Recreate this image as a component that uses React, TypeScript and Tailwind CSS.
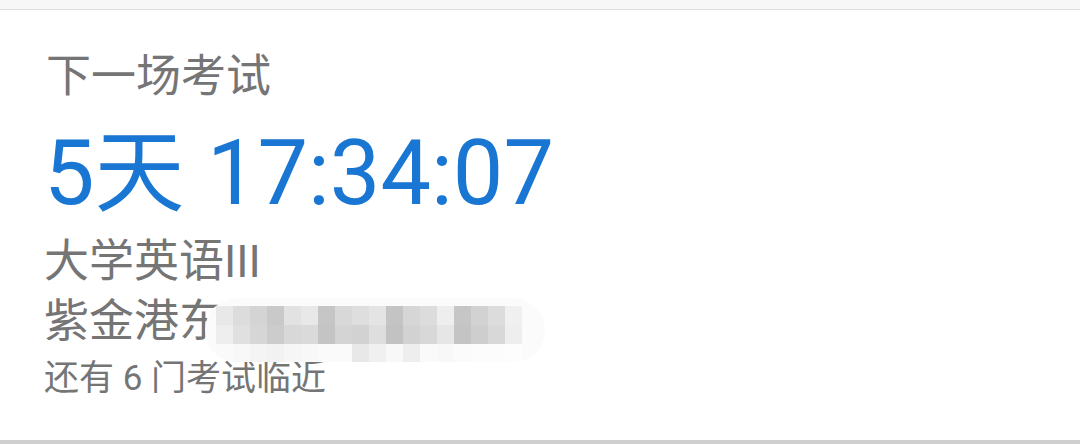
import React from 'react';

// Mosaic used where the original location text is masked
const mosaic = [
  ['#e8e8e8', '#dcdcdc', '#d4d4d4', '#c9c9c9', '#e2e2e2', '#e8e8e8', '#c6c6c6', '#d8d8d8', '#dedede', '#e4e4e4', '#c4c4c4', '#d6d6d6', '#dcdcdc', '#eeeeee', '#c6c6c6', '#d2d2d2', '#dcdcdc', '#f0f0f0'],
  ['#eeeeee', '#e0e0e0', '#d6d6d6', '#cccccc', '#d8d8d8', '#dadada', '#c4c4c4', '#d4d4d4', '#d2d2d2', '#dedede', '#c2c2c2', '#d2d2d2', '#d8d8d8', '#e6e6e6', '#c4c4c4', '#cecece', '#d8d8d8', '#eeeeee'],
  ['#fafafa', '#f8f8f8', '#f4f4f4', '#f2f2f2', '#f6f6f6', '#f8f8f8', '#fafafa', '#fafafa', '#e8e8e8', '#f0f0f0', '#f8f8f8', '#eeeeee', '#fafafa', '#f8f8f8', '#fbfbfb', '#fcfcfc', '#fcfcfc', '#fdfdfd'],
];

const App = () => {
  return (
    <div className="w-[1080px] h-[444px] bg-[#f5f5f5] overflow-hidden" style={{ fontFamily: 'Roboto, "Noto Sans CJK SC", sans-serif' }}>
      <div className="h-[9px] bg-[#f7f7f7]" />
      <div className="h-[431px] bg-white border-t border-[#dedede] px-[46px] pt-[40px] text-[#757575]">
        <div className="h-[53px] text-[45px] leading-[53px]">下一场考试</div>
        <div className="h-[124px] text-[90px] leading-[142px] text-[#1976d2] -ml-[2px] whitespace-nowrap">5天 17:34:07</div>
        <div className="h-[69px] text-[45px] leading-[69px] -ml-[2px]">大学英语III</div>
        <div className="relative h-[51px] text-[45px] leading-[51px] -ml-[2px]">
          紫金港东
          <div className="absolute left-[161px] top-[2px] h-[64px] w-[340px] rounded-full bg-[#fbfbfb] overflow-hidden">
            <div className="absolute left-[11px] top-[8px] flex flex-col">
              {mosaic.map((row, i) => (
                <div key={i} className="flex">
                  {row.map((c, j) => (
                    <div key={j} className="w-[17px] h-[19px]" style={{ background: c }} />
                  ))}
                </div>
              ))}
            </div>
          </div>
        </div>
        <div className="h-[64px] text-[35px] leading-[64px] -ml-[2px]">还有 6 门考试临近</div>
      </div>
      <div className="h-[4px] bg-[#cfcfcf]" />
    </div>
  );
};

export default App;
